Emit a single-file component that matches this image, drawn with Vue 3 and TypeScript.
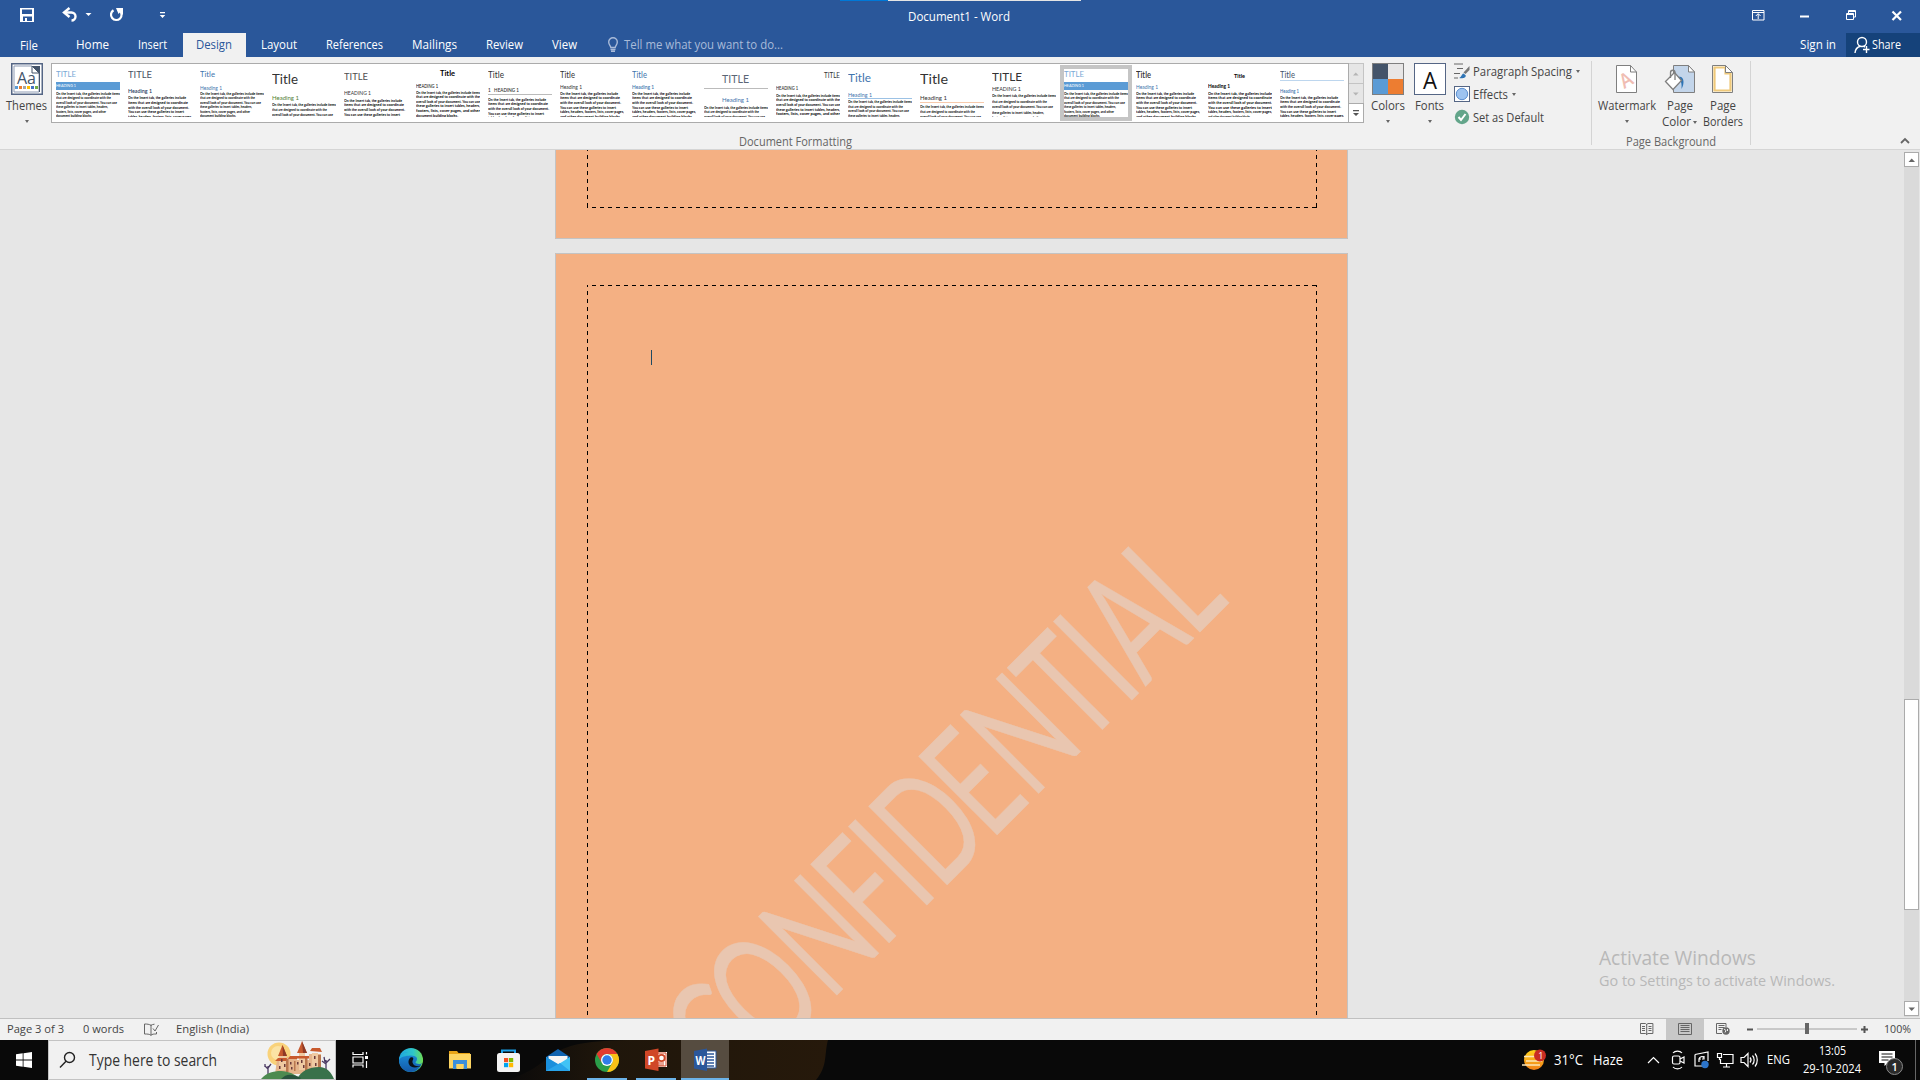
<script setup lang="ts">
import { defineComponent, h } from 'vue'

// Single line of interface text drawn at an exact advance width.
const Txt = defineComponent({
  props: {
    t: { type: String, required: true },
    w: { type: Number, required: true },
    s: { type: Number, default: 12 },
    lh: { type: Number, default: 16 },
  },
  setup(p) {
    return () =>
      h('svg', { class: 'txt', width: p.w, height: p.lh, style: { overflow: 'visible', display: 'block', flex: 'none' } }, [
        h('text', { x: 0, y: p.lh - 4, 'font-size': p.s, textLength: p.w, lengthAdjust: 'spacingAndGlyphs', fill: 'currentColor' }, p.t),
      ])
  },
})

interface Thumb {
  title: [string, number, number, number, number, string, number?]
  head: [string, number, number, number, string, number?]
  body: number
  pitch?: number
  kind: 'a' | 'b'
  just?: boolean
  line?: [number, string]
  band?: boolean
  sel?: boolean
}

const linesA = [
  'On the Insert tab, the galleries include items',
  'that are designed to coordinate with the',
  'overall look of your document. You can use',
  'these galleries to insert tables, headers,',
  'footers, lists, cover pages, and other',
  'document building blocks.',
]
const linesB = [
  'On the Insert tab, the galleries include',
  'items that are designed to coordinate',
  'with the overall look of your document.',
  'You can use these galleries to insert',
  'tables, headers, footers, lists, cover pages,',
  'and other document building blocks',
]
const wA = [64, 55, 61, 52, 50, 36]
const wB = [58, 60, 61, 56, 64, 60]

const blue = '#3f75ad'
const dark = '#333'
const slate = '#44546a'
const thumbs: Thumb[] = [
  { title: ['TITLE', 0, 8, 20, 8, '#7aa9d6'], head: ['HEADING 1', 0, 18, 20, '#fff'], body: 25.5, kind: 'a', band: true },
  { title: ['TITLE', 0, 9, 24, 10, '#4a5463'], head: ['Heading 1', 0, 24, 24, '#1f3c60', 600], body: 30, pitch: 4.8, kind: 'b' },
  { title: ['Title', 0, 8, 15, 8, blue], head: ['Heading 1', 0, 21, 22, blue], body: 25.5, kind: 'a' },
  { title: ['Title', 0, 14.5, 26, 13.5, dark], head: ['Heading 1', 0, 31, 27, '#538135'], body: 37, pitch: 5, kind: 'a' },
  { title: ['TITLE', 0, 11, 24, 10, '#505050'], head: ['HEADING 1', 0, 26, 27, dark], body: 32.5, pitch: 4.8, kind: 'b' },
  { title: ['Title', 24, 7, 15, 7.5, '#000', 700], head: ['HEADING 1', 0, 19, 22, '#000'], body: 24.5, pitch: 4.6, kind: 'a', just: true },
  { title: ['Title', 0, 8.5, 16, 8.5, dark], head: ['1\u00a0\u00a0 HEADING 1', 0, 22.5, 31, dark, 600], body: 31.5, pitch: 4.7, kind: 'b', line: [25.5, '#bbb'] },
  { title: ['Title', 0, 8.5, 15, 8.5, dark], head: ['Heading 1', 0, 20, 22, dark], body: 25.5, pitch: 4.7, kind: 'b' },
  { title: ['Title', 0, 8.5, 15, 8.5, blue], head: ['Heading 1', 0, 20, 22, blue, 600], body: 25.5, pitch: 4.7, kind: 'b' },
  { title: ['TITLE', 18, 13.5, 27, 10.5, '#5b6676'], head: ['Heading 1', 18, 32.5, 27, blue], body: 39.5, pitch: 4.9, kind: 'a', line: [19.5, '#bbb'] },
  { title: ['TITLE', 48, 8.5, 16, 7, dark], head: ['HEADING 1', 0, 21, 22, dark, 600], body: 27.5, pitch: 4.7, kind: 'a', just: true },
  { title: ['Title', 0, 12.5, 23, 12, blue], head: ['Heading 1', 0, 28, 24, blue], body: 34, pitch: 4.7, kind: 'a', line: [29.5, '#9cc2e5'] },
  { title: ['Title', 0, 14.5, 28, 13.5, dark], head: ['Heading 1', 0, 31, 27, dark], body: 39, pitch: 4.8, kind: 'a', line: [33.5, '#f7caac'] },
  { title: ['TITLE', 0, 12, 30, 11.5, dark], head: ['HEADING 1', 0, 22, 29, dark], body: 28, pitch: 5.6, kind: 'a' },
  { title: ['TITLE', 0, 8, 20, 8, '#7aa9d6'], head: ['HEADING 1', 0, 18, 20, '#fff'], body: 25.5, kind: 'a', band: true, sel: true },
  { title: ['Title', 0, 8.5, 15, 8.5, dark, 600], head: ['Heading 1', 0, 20, 22, blue], body: 25.5, pitch: 4.7, kind: 'b' },
  { title: ['Title', 26, 8.5, 11, 5.5, '#000', 700], head: ['Heading 1', 0, 19, 22, '#000', 700], body: 25.5, pitch: 4.7, kind: 'b', just: true },
  { title: ['Title', 0, 8.5, 15, 8.5, slate], head: ['Heading 1', 0, 24, 19, blue, 600], body: 29.5, pitch: 4.7, kind: 'b', line: [11.5, '#bdd6ee'] },
]

function bodyLines(t: Thumb) {
  const src = t.kind === 'a' ? linesA : linesB
  const ws = t.kind === 'a' ? wA : wB
  return src
    .map((text, i) => ({
      text,
      w: t.just ? (i === 5 ? 42 : 64) : ws[i],
      y: t.body + i * (t.pitch ?? 4.53),
    }))
    .filter((l) => l.y < 51)
}

const tabsBefore = [['Home', 33], ['Insert', 29]] as [string, number][]
const tabsAfter = [['Layout', 36], ['References', 57], ['Mailings', 45], ['Review', 37], ['View', 25]] as [string, number][]

// Letter origins of the page watermark along its baseline.
const letterScale = 0.66
const letterX = [-153, -95.5, -14.6, 59.4, 112.7, 141.6, 212, 270.8, 345, 402.6, 431, 498.9]
  .map((v) => (v / letterScale).toFixed(1))
  .join(' ')
const themeDots = ['#5b9bd5', '#ed7d31', '#a5a5a5', '#ffc000', '#4472c4', '#70ad47']
</script>

<template>
  <div class="screen">
    <header class="titlebar">
      <div class="strip"><i></i><b></b></div>
      <svg class="qat" width="180" height="33">
        <path fill="#fff" fill-rule="evenodd" d="M20 8h14v14H20zM22 9.500v4.500h10V9.500zM23 16.500V21h2v-3h2v3h5v-4.500z" />
        <path d="M65 12.500h6.500a4 4 0 0 1 0 8" fill="none" stroke="#fff" stroke-width="2.400" />
        <path d="M69.500 8l-5.500 4.500 5.500 4.500" fill="none" stroke="#fff" stroke-width="2.400" />
        <path d="M85.500 13h6l-3 3z" fill="#fff" />
        <path d="M113.500 10.200a5.300 5.300 0 1 0 6 .3" fill="none" stroke="#fff" stroke-width="2.200" />
        <path d="M116 8h7v6.500h-2.200V11.500L118.500 14z" fill="#fff" />
        <path d="M160 12h5v1.200h-5zM159.700 15h5.600l-2.800 3z" fill="#fff" />
      </svg>
      <Txt class="doc-title" t="Document1 - Word" :w="102" />
      <svg class="winbtns" width="180" height="33" fill="none" stroke="#fff">
        <path d="M12.500 10.500h11.500v9.500H12.500zM12.500 12.500H24M18.200 19v-5M15.800 16l2.400-2.400 2.400 2.400" />
        <path d="M60 16.500h9" stroke-width="2" />
        <path d="M106.500 13.500h7v6h-7zM106.500 14.500h7M108.500 13v-2.500h7v6.500H114M108.500 11.500h7" />
        <path d="M152.500 11.500l8.500 8.500M161 11.500l-8.500 8.500" stroke-width="2.200" />
      </svg>
    </header>

    <nav class="tabs">
      <Txt class="file" t="File" :w="18" :lh="17" />
      <Txt v-for="[n, w] in tabsBefore" :key="n" :t="n" :w="w" />
      <div class="active"><Txt t="Design" :w="36" /></div>
      <Txt v-for="[n, w] in tabsAfter" :key="n" :t="n" :w="w" />
      <div class="tell">
        <svg width="12" height="16" fill="none" stroke="#a9bbd9" stroke-width="1.400"><path d="M3.800 10.500C3.500 8.500 1.700 7.800 1.700 5a4.300 4.300 0 0 1 8.600 0c0 2.800-1.800 3.500-2.100 5.500zM3.500 12.500h5M4 14.300h4" /></svg>
        <Txt t="Tell me what you want to do..." :w="159" />
      </div>
      <Txt class="signin" t="Sign in" :w="36" />
      <div class="share">
        <svg width="17" height="18" fill="none" stroke="#fff" stroke-width="1.400"><circle cx="8" cy="6" r="4.500" /><path d="M1 17c.2-4 2.500-6 5.500-6.800M9.500 10.200l1.500 1M12.500 10v7M9 13.500h6.500" /></svg>
        <Txt t="Share" :w="29" />
      </div>
    </nav>

    <section class="ribbon">
      <div class="big themes">
        <svg width="32" height="32">
          <rect x=".75" y=".75" width="30.500" height="30.500" fill="#fff" stroke="#556685" stroke-width="1.500" />
          <path d="M3 3h18l7 7v19H3z" fill="#fff" stroke="#8e9bb3" />
          <path d="M21 3v7h7v19h1V3z" fill="#44546a" /><path d="M21 3v7h7z" fill="#fff" stroke="#44546a" />
          <text x="6" y="21" font-size="17" textLength="19" lengthAdjust="spacingAndGlyphs" fill="#44546a">Aa</text>
          <rect v-for="(c, i) in themeDots" :key="c" :x="4 + i * 4" y="23" width="3" height="3" :fill="c" />
        </svg>
        <Txt t="Themes" :w="41" />
        <i class="arr"></i>
      </div>

      <div class="group formatting">
        <div class="row">
          <div class="gallery">
            <div v-for="(t, i) in thumbs" :key="i" class="thumb" :class="{ sel: t.sel }">
              <svg width="64" height="48" class="mini">
                <rect v-if="t.band" x="0" y="13" width="64" height="8" fill="#5b9bd5" />
                <text :x="t.title[1]" :y="t.title[2]" :textLength="t.title[3]" :font-size="t.title[4]" :fill="t.title[5]" :font-weight="t.title[6] ?? 400" lengthAdjust="spacingAndGlyphs">{{ t.title[0] }}</text>
                <path v-if="t.line" :d="`M0 ${t.line[0]}h64`" :stroke="t.line[1]" stroke-width="1" />
                <text :x="t.head[1]" :y="t.head[2]" :textLength="t.head[3]" :font-size="t.band ? 4 : 5.500" :fill="t.head[4]" :font-weight="t.head[5] ?? 400" lengthAdjust="spacingAndGlyphs">{{ t.head[0] }}</text>
                <text v-for="l in bodyLines(t)" :key="l.y" x="0" :y="l.y" :textLength="l.w" font-size="4.100" font-weight="700" fill="#000" lengthAdjust="spacingAndGlyphs">{{ l.text }}</text>
              </svg>
            </div>
          </div>
          <div class="gscroll">
            <div><svg width="13" height="19"><path d="M4 11.500h5.600L6.800 8.500z" fill="#b5b5b5" /></svg></div>
            <div><svg width="13" height="18"><path d="M4 8.500h5.600l-2.800 3z" fill="#b5b5b5" /></svg></div>
            <div class="more"><svg width="13" height="18"><path d="M4 6h6v1.200H4zM4 9h6l-3 3z" fill="#555" /></svg></div>
          </div>
          <div class="big colors">
            <svg width="32" height="32"><path fill="#44546a" d="M0 0h16v16H0z" /><path fill="#e7e6e6" d="M16 0h16v16H16z" /><path fill="#5b9bd5" d="M0 16h16v16H0z" /><path fill="#ed7d31" d="M16 16h16v16H16z" /><rect x=".5" y=".5" width="31" height="31" fill="none" stroke="#7f7f7f" /></svg>
            <Txt t="Colors" :w="34" />
            <i class="arr"></i>
          </div>
          <div class="big fonts">
            <svg width="32" height="32"><rect x=".5" y=".5" width="31" height="31" fill="#fff" stroke="#556685" /><text x="9" y="26" font-size="23" textLength="14" lengthAdjust="spacingAndGlyphs" fill="#111">A</text></svg>
            <Txt t="Fonts" :w="29" />
            <i class="arr"></i>
          </div>
          <div class="small">
            <div>
              <svg width="16" height="16"><path d="M0 1h9M3 5.500h6M0 10.500h6M0 15h4" stroke="#666" /><path d="M15.500 3v4l-4 4-2-1.500z" fill="#777" /><path d="M5 15c2 0 2.500-4 4.500-4.500l2.200 1.800c.5 3-4 3.500-6.700 2.700z" fill="#2e74b5" /></svg>
              <Txt t="Paragraph Spacing" :w="99" /><i class="arr"></i>
            </div>
            <div>
              <svg width="16" height="16"><rect x=".5" y=".5" width="15" height="15" fill="#fff" stroke="#556685" /><circle cx="8" cy="8" r="5.700" fill="#9dc3f0" stroke="#5b8fd0" /></svg>
              <Txt t="Effects" :w="35" /><i class="arr"></i>
            </div>
            <div>
              <svg width="16" height="16"><circle cx="8" cy="8" r="7.200" fill="#63a58a" /><path d="M4.500 8l2.500 3 4.500-6" fill="none" stroke="#fff" stroke-width="2" /></svg>
              <Txt t="Set as Default" :w="71" />
            </div>
          </div>
        </div>
        <Txt class="glabel" t="Document Formatting" :w="113" />
      </div>

      <div class="group background">
        <div class="row">
          <div class="big wm">
            <svg width="32" height="32"><path d="M5.500 2.500h14l6 6.500v20.500h-20z" fill="#fff" stroke="#7f7f7f" /><path d="M19.500 2.500V9h6" fill="none" stroke="#7f7f7f" /><g transform="rotate(-30 15 17)"><text x="9" y="24" font-size="20" font-weight="600" textLength="12" lengthAdjust="spacingAndGlyphs" fill="#f0bdb3">A</text></g></svg>
            <Txt t="Watermark" :w="58" />
            <i class="arr"></i>
          </div>
          <div class="big pc">
            <svg width="32" height="32"><path d="M9.500 2.500h15l6 6.500v20.500h-21z" fill="#c3d5ea" stroke="#7f7f7f" /><path d="M24.500 2.500V9h6z" fill="#fff" stroke="#7f7f7f" /><path d="M14 14c6-2 7 6 3.500 12 .5-6-.5-8-3.500-12z" fill="#2e74b5" /><path d="M1.500 18.500l9-9 7 8-8.500 9z" fill="#fff" stroke="#7f7f7f" stroke-width="1.300" /><path d="M6.500 15V9.500a2 2 0 0 1 4.500 0V17" fill="none" stroke="#7f7f7f" stroke-width="1.300" /></svg>
            <Txt t="Page" :w="26" />
            <div class="inl"><Txt t="Color" :w="29" /><i class="arr"></i></div>
          </div>
          <div class="big pb">
            <svg width="32" height="32"><path d="M5.500 2.500h13l7 7v20h-20z" fill="#fff" stroke="#7f7f7f" /><path d="M7.500 4.500h11v6h5v17h-16z" fill="none" stroke="#efc97a" stroke-width="2.200" /><path d="M18.500 2.500v7h7z" fill="#fff" stroke="#7f7f7f" /></svg>
            <Txt t="Page" :w="26" />
            <Txt class="second" t="Borders" :w="40" />
          </div>
        </div>
        <Txt class="glabel" t="Page Background" :w="90" />
      </div>
      <svg class="collapse" width="10" height="8"><path d="M1 6l4-4 4 4" fill="none" stroke="#666" stroke-width="1.800" /></svg>
    </section>

    <main class="workspace">
      <div class="canvas">
        <svg class="page" width="793" height="89">
          <path d="M.5 0v88.500h792V0" fill="none" stroke="#c3c3c3" />
          <g stroke="#000" stroke-dasharray="4 4">
            <path d="M32.500 -3V58" /><path d="M761.500 -3V58" /><path d="M37 57.500H762" /><path d="M32.500 53v5M761.500 53v5" stroke-dasharray="none" />
          </g>
        </svg>
        <svg class="page" width="793" height="765">
          <path d="M.5 770V.5h792V770" fill="none" stroke="#c3c3c3" />
          <g stroke="#000" stroke-dasharray="4 4">
            <path d="M32.500 38V770" /><path d="M761.500 38V770" /><path d="M37 32.500H762" /><path d="M32.500 32v2M761.500 32v2" stroke-dasharray="none" />
          </g>
          <g transform="translate(285.500 738.500) rotate(-45) scale(.66 1)">
            <text class="mark" :x="letterX" y="0">CONFIDENTIAL</text>
          </g>
          <path d="M96.500 97v15" stroke="#1f4a63" />
        </svg>
      </div>
      <div class="activate">
        <Txt t="Activate Windows" :w="157" :s="19.500" :lh="24" />
        <Txt t="Go to Settings to activate Windows." :w="236" :s="14.500" :lh="21" />
      </div>
      <div class="vscroll">
        <div class="btn"><svg width="13" height="13"><path d="M3.500 9h6.500L6.700 5.500z" fill="#666" /></svg></div>
        <div class="grip"></div>
        <div class="btn"><svg width="13" height="13"><path d="M3.500 5.500h6.500L6.700 9z" fill="#666" /></svg></div>
      </div>
    </main>

    <footer class="status">
      <Txt t="Page 3 of 3" :w="57" :s="11.500" />
      <Txt t="0 words" :w="41" :s="11.500" />
      <svg width="15" height="13" fill="none" stroke="#666"><path d="M7 1.500v11M7 2.500C5.500 1.200 3 1 .5 1v10c2.500 0 5 0 6.500 1.300C8 11 10 11 12.500 11V9M7 2.500c1-.9 2-1.200 3.500-1.300M9 5.500l2 2.500 3.500-6" /></svg>
      <Txt t="English (India)" :w="73" :s="11.500" />
      <svg class="views" width="110" height="21" fill="none" stroke="#666">
        <rect x="26" y="0" width="38" height="21" fill="#c8c8c8" stroke="none" />
        <path d="M.5 4.500h5l1.200 1 1.200-1h5v10h-5l-1.200 1-1.200-1h-5zM6.700 5v11M2 7.500h3M2 9.500h3M2 11.500h3M8.500 7.500h3M8.500 9.500h3M8.500 11.500h3" />
        <path d="M38.500 4.500h13v11h-13zM40.500 6.500h9M40.500 8.500h9M40.500 10.500h9M40.500 12.500h9" />
        <path d="M86 8V4.500H76.500v10H82M78.500 6.500h6M78.500 8.500h6M78.500 10.500h3" /><circle cx="86" cy="12" r="3.700" fill="#666" stroke="none" /><path d="M84 10l2 1.500-1 2M87.500 10v2" stroke="#eee" />
      </svg>
      <svg class="zoomer" width="122" height="21"><path d="M0 10.500h6M114 10.500h7M117.500 7v7" stroke="#555" stroke-width="2" /><path d="M10 10h100" stroke="#a0a0a0" /><rect x="58" y="4" width="4" height="11" fill="#666" /></svg>
      <Txt t="100%" :w="27" :s="11" />
    </footer>

    <div class="taskbar">
      <svg class="start" width="48" height="40"><path fill="#fff" d="M16 14.300l6.700-1v6.200H16zM23.500 13.200L32 12v7.500h-8.500zM16 20.400h6.700v6.300l-6.700-1zM23.500 20.400H32V28l-8.500-1.200z" /></svg>
      <div class="search">
        <svg width="18" height="18" fill="none" stroke="#222" stroke-width="1.400"><circle cx="10.500" cy="6.500" r="5" /><path d="M7 10.200L1 16.500" /></svg>
        <Txt t="Type here to search" :w="128" :s="15.500" :lh="20" />
        <svg class="castle" width="74" height="38">
          <circle cx="18" cy="13" r="11.500" fill="#f9d27a" />
          <circle cx="17" cy="12" r="7" fill="#fbe3a4" />
          <g stroke="#4b3a63" stroke-width="1.300" fill="none"><path d="M7 34V25M7 28l-3-3M7 27l3-4M4 23v3M65 29V19M65 23l-4-3M65 22l4-4M63 16l1 5" /></g>
          <path fill="#e5b58c" d="M16 19h10v-3h10v3h12v-6h12v20H14z" />
          <path fill="#efcaa2" d="M18 13h7v16h-7zM38 11h6v18h-6zM51 12h6v17h-6z" />
          <path fill="#b9774f" d="M25 18h2.500v13H25zM44 16h2.500v14H44zM57 14h3v14h-3zM33 20h1.500v10H33z" />
          <path fill="#c85a2e" d="M21.500 4l4.500 11h-9zM41 0l1.500 4 3.500 8H36l3.500-8zM49 10l2-3h8l2 4zM14 20l3-3h9l-1 3zM27 18l2-3h7v3zM35 15h13v2.500H35z" />
          <path fill="#8e3b26" d="M21.500 4l4.500 11h-4zM41 0l5 12h-4z" />
          <path fill="#6b3a3a" d="M20 18h1.500v3H20zM23 23h1.500v3H23zM29 21h1.500v2.500H29zM36 21h1.500v2.500H36zM40 19h1.500v3H40zM42 24h1.500v3H42zM53 15h1.500v3H53zM54 22h1.500v3H54zM18 25h1.500v3H18zM48 22h1.500v3H48zM30 26h1.500v2.500H30z" />
          <path fill="#39714a" d="M36 38c4-8 12-12 22-12 8 0 12 5 15 12z" />
          <path fill="#4d8a50" d="M0 38c5-6 12-8 20-8 8 .5 14 3 19 8z" />
          <path fill="#28543d" d="M20 38c5-5 10-6 20-1l-1 1z" />
        </svg>
      </div>
      <svg class="apps" width="500" height="40">
        <defs>
          <linearGradient id="edgeA" x1="0" y1="0" x2="1" y2="0"><stop offset="0" stop-color="#1fa8e0" /><stop offset=".6" stop-color="#2fc6c8" /><stop offset="1" stop-color="#6ddc55" /></linearGradient>
          <linearGradient id="edgeB" x1="0" y1="0" x2="0" y2="1"><stop offset="0" stop-color="#1b8fdc" /><stop offset="1" stop-color="#1459a8" /></linearGradient>
          <linearGradient id="night" x1="0" x2="1"><stop offset="0" stop-color="#0b0a0a" /><stop offset=".3" stop-color="#1f160b" /><stop offset="1" stop-color="#26190b" /></linearGradient>
        </defs>
        <path d="M172 40C230 20 200 0 300 0h192c-4 14 0 26-12 40z" fill="url(#night)" />
        <rect x="345" width="48" height="40" fill="#564c40" />
        <path d="M251 38h40v2h-40zM300 38h40v2h-40zM345 38h48v2h-48z" fill="#6cb3e8" />
        <g fill="none" stroke="#fff" stroke-width="1.200"><path d="M17 12v2.500h10V12M17 27.500V25h10v2.500M17 17h10v6H17zM30.500 12v2.500M30.500 21v7" /><path d="M29 17.500h3" stroke-width="3" /></g>
        <circle cx="75" cy="20" r="12" fill="url(#edgeA)" />
        <path d="M63 20c0-5 5-8 9.500-8 6 0 8.500 4 8.500 7 0 2-1.500 2.500-1.500 3.500 1 2 5 1.500 6.500.5C83.500 29 79.500 32 75 32c-7 0-12-5.500-12-12z" fill="url(#edgeB)" />
        <path d="M63 20c0-5 5-8 9.500-8 6 0 13 2 14.300 7.500.5 3-1.800 4.500-3.800 4.500 1-6-4-9-9-8.500-4 .3-9 1-11 4.500z" fill="url(#edgeA)" />
        <path d="M74.500 17.500c-3 2.500-2.500 7 .5 9 3.500 2 8 .5 10.500-1-2 1-8 1.500-9-3-.3-2 .8-2.700.8-4 0-.8-1.600-1.500-2.800-1z" fill="#0b1016" />
        <path d="M113 11h8l1.500 2H134v15h-21z" fill="#e8a417" /><path d="M113 14h22v14.500h-22z" fill="#fcd462" /><path d="M117 20h14v9h-3.500v-5h-7v5H117z" fill="#3b8fdc" /><path d="M120.500 24h7v5h-7z" fill="#fcd462" />
        <path d="M166 14v-3.500h13V14" fill="none" stroke="#1a9fe8" stroke-width="2" /><rect x="161" y="13" width="23" height="19" rx="2.500" fill="#f3f3f3" />
        <path fill="#f25022" d="M168 18h4.200v4.200H168z" /><path fill="#7fba00" d="M173 18h4.200v4.200H173z" /><path fill="#00a4ef" d="M168 23h4.200v4.200H168z" /><path fill="#ffb900" d="M173 23h4.200v4.200H173z" />
        <path d="M210 17l12-8 12 8v6h-24z" fill="#1063b0" /><path d="M212.500 16h19v8h-19z" fill="#f5f5f5" /><path d="M210 17l12 7.500 12-7.500v14h-24z" fill="#41c3f5" /><path d="M210 17l24 14h-24z" fill="#1a8fdc" /><path d="M210 31l14-8 10 8z" fill="#28a4ea" />
        <circle cx="271" cy="20" r="12" fill="#2a9d49" /><path d="M260.600 14A12 12 0 0 1 281.400 14H271a6 6 0 0 0-5.200 9z" fill="#e33b2e" /><path d="M281.400 14A12 12 0 0 1 271 32l5.200-9A6 6 0 0 0 271 14z" fill="#fbc116" /><circle cx="271" cy="20" r="6" fill="#fff" /><circle cx="271" cy="20" r="4.700" fill="#2f7de9" />
        <path d="M320 12h11v15h-11z" fill="#fff" /><path d="M320 13h10v13h-10" fill="none" stroke="#d04727" /><circle cx="325.500" cy="18" r="3.200" fill="none" stroke="#d04727" stroke-width="1.800" /><path d="M321 23h7M321 25h7" stroke="#d04727" /><path d="M309 11l13.500-2.500v22.500L309 28.500z" fill="#d04727" /><text x="311.500" y="24.500" font-size="12" font-weight="700" fill="#fff">P</text>
        <path d="M370 11h10v17h-10z" fill="#fff" stroke="#2b579a" /><path d="M371 14h7M371 17h7M371 20h7M371 23h7M371 26h7" stroke="#2b579a" stroke-width="1.300" /><path d="M358 11l13-2.500v22.500L358 28.500z" fill="#2b579a" /><text x="359.500" y="24.500" font-size="11.500" font-weight="700" textLength="10" lengthAdjust="spacingAndGlyphs" fill="#fff">W</text>
      </svg>
      <div class="weather">
        <svg width="26" height="24"><defs><linearGradient id="sun" x1="0" y1="0" x2="0" y2="1"><stop offset="0" stop-color="#ffd31c" /><stop offset="1" stop-color="#f08019" /></linearGradient></defs><circle cx="12" cy="12" r="10" fill="url(#sun)" /><path d="M2 8.500h11M4 13h16M0 17h18" stroke="#fbe6b8" stroke-width="1.600" /><circle cx="18" cy="7.500" r="6" fill="#c92c23" /><text x="16.200" y="10.800" font-size="9" fill="#fff">1</text></svg>
        <Txt t="31°C" :w="29" :s="14" /><Txt t="Haze" :w="30" :s="14" />
      </div>
      <svg class="tray" width="112" height="24" fill="none" stroke="#fff" stroke-width="1.200">
        <path d="M1 15l5.500-5.500L12 15" /><rect x="25.500" y="8" width="7.500" height="8" rx="1.500" /><path d="M33 11l4-2v6l-4-2M26 5c2-2.500 7-2.500 9 0M26 19c2 2.500 7 2.500 9 0" />
        <path d="M48 6.500L61 4v9M48 6.500V18h7M52 14v-3h2M57 8v3h-2M52 11a3 3 0 0 1 5-1.500" /><circle cx="58" cy="16.500" r="3.700" fill="#2c74c9" stroke="none" />
        <path d="M76 6.500h10v9H73.500V11M76 19h7M79.500 16v3M70.500 5.500h4v4h-4zM72.500 10v2" />
        <path d="M94 9.500h3l4-4v13l-4-4h-3zM103 9.500c1.300 1.500 1.300 3.500 0 5M105.500 7.500c2.200 2.500 2.200 6.500 0 9M108 5.500c3 3.500 3 9.500 0 13" />
      </svg>
      <Txt class="lang" t="ENG" :w="23" />
      <div class="clock"><Txt t="13:05" :w="27" /><Txt t="29-10-2024" :w="58" /></div>
      <svg class="note" width="26" height="28"><path d="M0 2h16v12H9l-3.500 3v-3H0z" fill="#fff" /><path d="M2.500 5h11M2.500 8h11M2.500 11h7" stroke="#111" /><circle cx="15.500" cy="17.500" r="8" fill="#2b2b2b" stroke="#8a8a8a" /><text x="12.500" y="21.500" font-size="11" font-weight="600" fill="#fff">1</text></svg>
      <i class="peek"></i>
    </div>
  </div>
</template>

<style>
html, body { margin: 0; overflow: hidden; background: #e6e6e6; }
svg { display: block; flex: none; }
svg text { font-family: 'Open Sans', 'Noto Sans', sans-serif; }
</style>

<style scoped>
.screen { width: 1920px; height: 1080px; display: flex; flex-direction: column; overflow: hidden; background: #e6e6e6; font-family: 'Open Sans', 'Noto Sans', sans-serif; color: #444; }
.titlebar { height: 33px; flex: none; background: #2a579a; color: #fff; display: flex; position: relative; }
.strip { position: absolute; top: 0; left: 840px; display: flex; }
.strip i { width: 48px; height: 1px; background: #0078d7; }
.strip b { width: 193px; height: 1px; background: #e5e5e5; }
.doc-title { margin: 9px 0 0 728px; }
.winbtns { margin-left: auto; }

.tabs { height: 24px; flex: none; background: #2a579a; color: #fff; display: flex; align-items: center; gap: 29px; }
.file { margin: 1px 9px 0 20px; }
.active { background: #f1f1f1; color: #2a579a; height: 24px; display: flex; align-items: center; padding: 0 14px 0 13px; margin: 0 -14px 0 -13px; }
.tell { display: flex; align-items: center; gap: 5px; color: #a9bbd9; margin-left: 1px; }
.signin { margin-left: auto; }
.share { width: 66px; height: 24px; padding-left: 8px; margin-left: -19px; background: #15427a; display: flex; align-items: center; gap: 1px; }

.ribbon { height: 92px; flex: none; background: #f1f1f1; border-bottom: 1px solid #d5d5d5; display: flex; position: relative; }
.big { display: flex; flex-direction: column; align-items: center; flex: none; padding-top: 6px; }
.big .txt { margin-top: 3px; }
.big > .arr { margin-top: 6px; }
.big .txt.second { margin-top: 0; }
.arr { width: 0; height: 0; border: 2.5px solid transparent; border-top: 3px solid #666; border-bottom: 0; flex: none; }
.themes { width: 41px; margin-left: 6px; }
.group { display: flex; flex-direction: column; align-items: center; border-right: 1px solid #d4d4d4; height: 84px; margin-top: 4px; }
.row { display: flex; height: 69px; align-self: stretch; margin-top: -4px; flex: none; }
.formatting { width: 1544px; }
.glabel { color: #666; margin-top: 8px; }
.gallery { margin: 6px 0 0 4px; width: 1296px; height: 58px; border: 1px solid #ababab; background: #fff; display: flex; flex: none; }
.thumb { width: 64px; height: 48px; border: 4px solid #fff; margin-top: 1px; flex: none; overflow: hidden; }
.thumb.sel { border-color: #c5c5c5; }
.mini { overflow: visible; }
.mini text { font-family: Lato, sans-serif; }
.gscroll { width: 15px; height: 60px; margin-top: 6px; display: flex; flex-direction: column; flex: none; }
.gscroll div { box-sizing: border-box; height: 20px; border: 1px solid #c4c4c4; border-left: 0; border-bottom: 0; background: #e6e6e6; }
.gscroll .more { background: #fff; border-color: #ababab; border-bottom: 1px solid #ababab; }
.colors { width: 34px; margin-left: 7px; }
.fonts { width: 32px; margin-left: 9px; }
.fonts .txt { margin-left: -1px; }
.small { margin: 6px 0 0 8px; display: flex; flex-direction: column; gap: 7px; }
.small div { display: flex; height: 16px; align-items: center; gap: 3px; }
.small .txt { margin-top: 2px; }
.small .arr { margin-left: 1px; }
.formatting .glabel { align-self: flex-start; margin-left: 692px; }
.background { width: 158px; }
.wm { width: 58px; margin-left: 6px; }
.pc { width: 37px; margin-left: 5px; }
.inl { display: flex; align-items: center; gap: 2px; }
.inl .txt { margin-top: 0 !important; }
.pb { width: 40px; margin-left: 5px; }
.collapse { position: absolute; right: 10px; bottom: 4px; }

.workspace { height: 868px; flex: none; background: #e6e6e6; display: flex; position: relative; overflow: hidden; border-bottom: 1px solid #c0c0c0; }
.canvas { margin-left: 555px; width: 1349px; display: flex; flex-direction: column; gap: 14px; }
.page { background: #f4b083; }
.mark { font-family: Lato, sans-serif; font-size: 155px; fill: #e9c6b0; stroke: #e9c6b0; stroke-width: .4px; stroke-linejoin: round; }
.activate { position: absolute; left: 1599px; top: 795px; color: #b8b8b8; }
.vscroll { width: 15px; margin-top: 2px; height: 865px; background: #dadada; display: flex; flex-direction: column; }
.btn { width: 13px; height: 13px; border: 1px solid #ababab; background: #fff; }
.grip { margin: 532px 0 91px; height: 209px; border: 1px solid #ababab; background: #fff; }

.status { height: 21px; flex: none; background: #f1f1f1; display: flex; align-items: center; padding-left: 7px; }
.status > .txt { margin: 0 19px 1px 0; }
.status > svg:nth-child(3) { margin: 0 17px 1px 1px; }
.views { margin-left: auto; }
.zoomer { margin: 0 15px 0 -3px; }
.status > .txt:last-child { margin-right: 9px; }

.taskbar { height: 40px; flex: none; background: #090909; color: #fff; display: flex; align-items: center; }
.search { width: 276px; height: 38px; border: 1px solid #c3c3c3; background: #f1f1f1; color: #333; display: flex; align-items: center; padding-left: 10px; box-sizing: content-box; }
.search .txt { margin-left: 12px; }
.castle { margin-left: 44px; }
.weather { display: flex; align-items: center; margin-left: 686px; }
.weather .txt { margin: 2px 0 0 6px; }
.weather .txt:last-child { margin-left: 10px; }
.tray { margin-left: 24px; }
.lang { margin-left: 8px; }
.clock { width: 60px; margin-left: 12px; display: flex; flex-direction: column; align-items: center; gap: 2px; }
.note { margin: 5px 0 0 17px; }
.peek { width: 1px; height: 40px; background: #666; margin-left: auto; margin-right: 4px; }
</style>
